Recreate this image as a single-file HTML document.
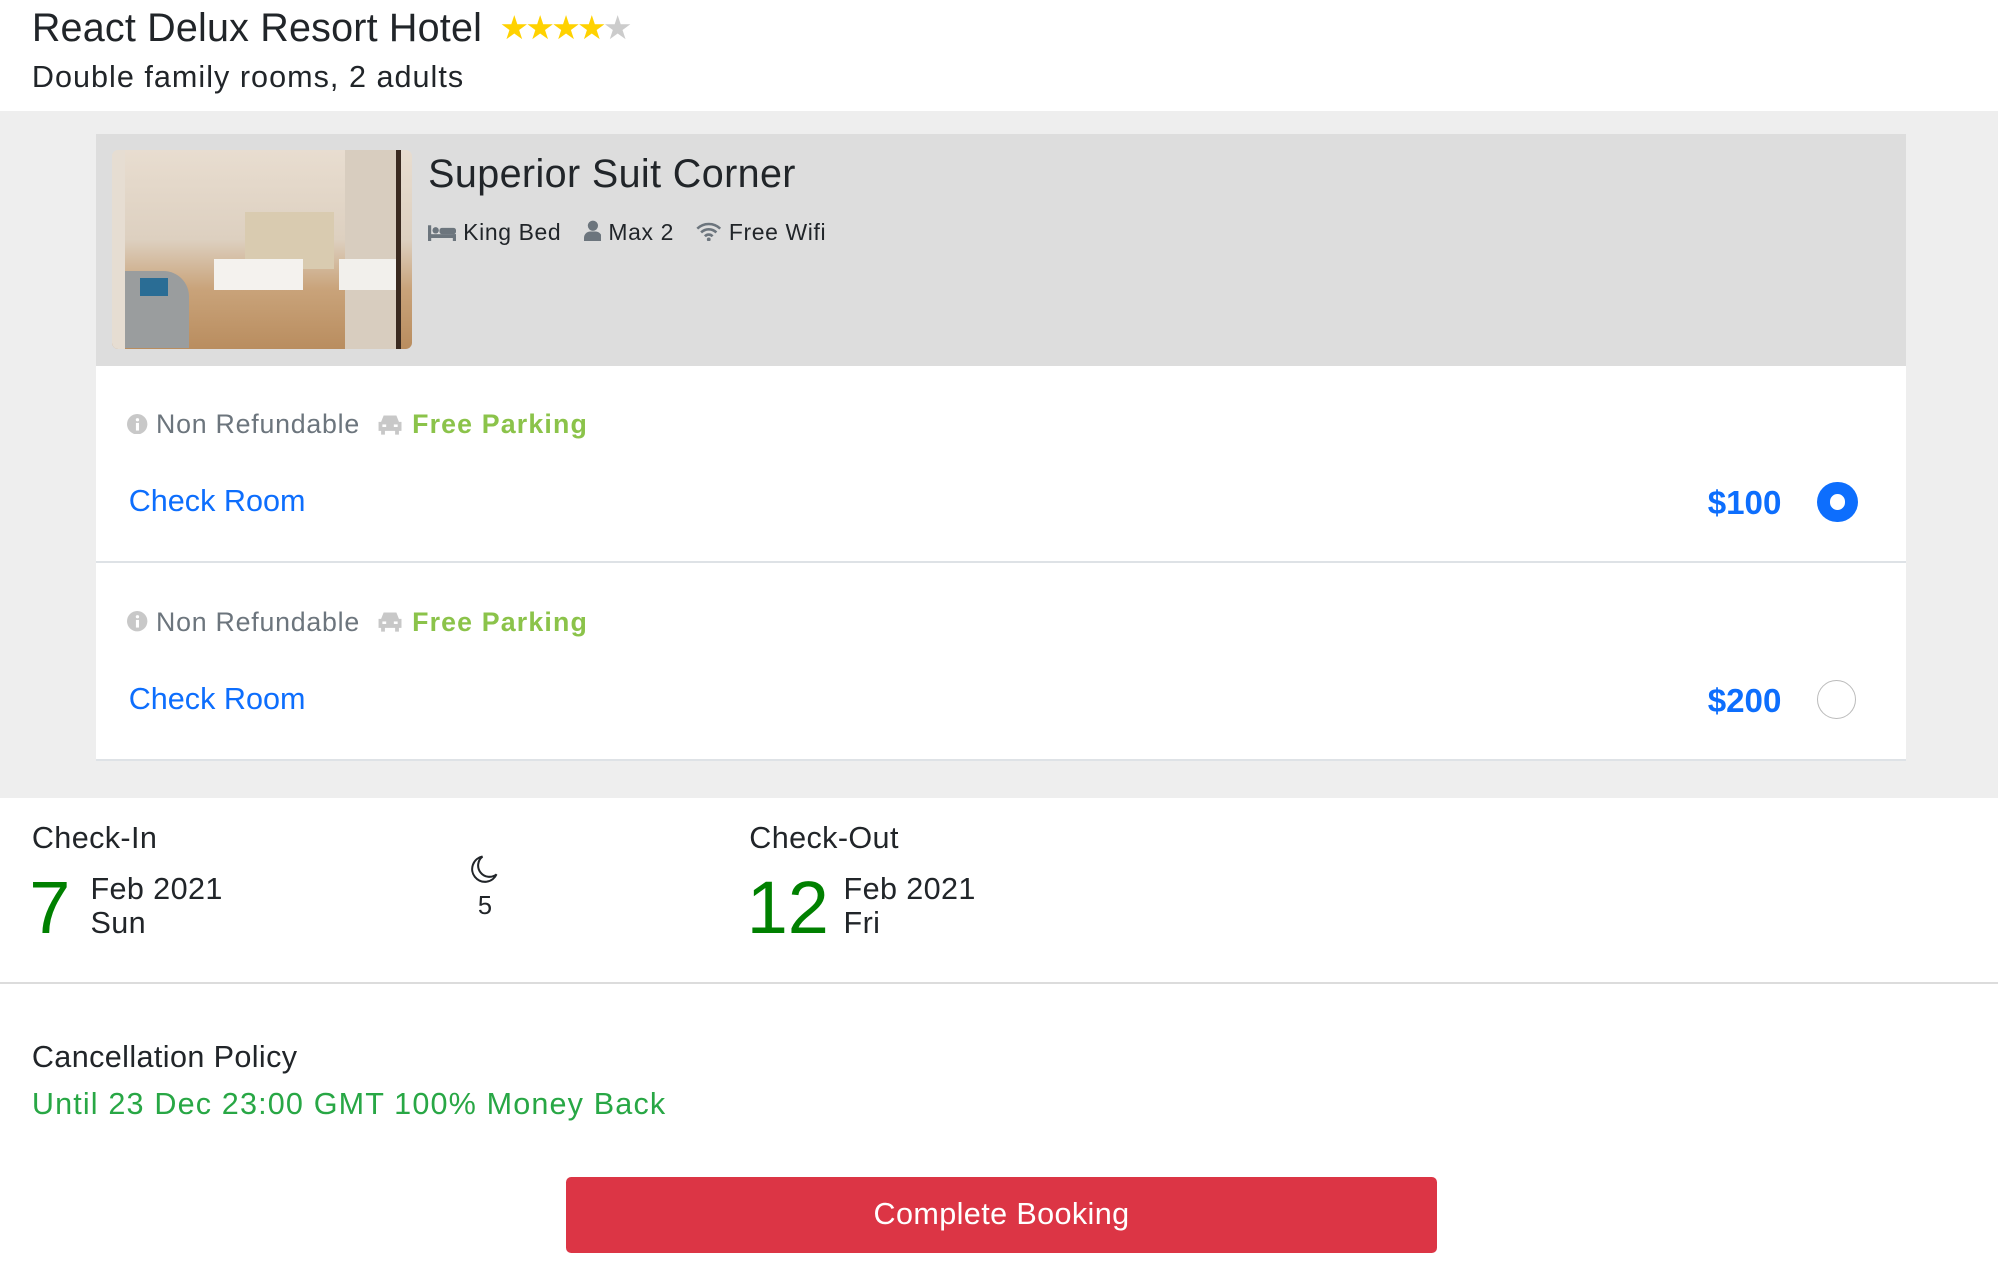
<!DOCTYPE html>
<html><head><meta charset="utf-8"><style>
html,body{margin:0;padding:0;background:#fff;overflow:hidden}
#w{position:relative;width:1568px;height:1011px;zoom:1.27423;font-family:"Liberation Sans",sans-serif;color:#212529}
.a{position:absolute;white-space:nowrap}
</style></head><body><div id="w">
<div class="a" style="left:25px;top:5px;font-size:31px;letter-spacing:0.15px">React Delux Resort Hotel</div>
<div class="a" style="left:392px;top:6px;font-size:26px;letter-spacing:-3px"><span style="color:#ffd200">★★★★</span><span style="color:#ccc">★</span></div>
<div class="a" style="left:25px;top:47px;font-size:24px;letter-spacing:0.8px">Double family rooms, 2 adults</div>

<div class="a" style="left:0;top:87px;width:1568px;height:539px;background:#eeeeee"></div>
<div class="a" style="left:75px;top:105px;width:1421px;height:182px;background:#dddddd"></div>
<div class="a" style="left:88px;top:118px;width:235px;height:156px;border-radius:5px;overflow:hidden;background:linear-gradient(180deg,#e8ddd0 0%,#ddd0c0 45%,#c9a37a 70%,#b98d5f 100%)">
  <div style="position:absolute;left:104px;top:48px;width:70px;height:45px;background:#d9cbb0"></div>
  <div style="position:absolute;left:80px;top:85px;width:70px;height:25px;background:#f4f2ee"></div>
  <div style="position:absolute;left:183px;top:0;width:40px;height:156px;background:#d8cdbf"></div>
  <div style="position:absolute;left:178px;top:85px;width:45px;height:25px;background:#f2f0ec"></div>
  <div style="position:absolute;left:223px;top:0;width:4px;height:156px;background:#3a2a20"></div>
  <div style="position:absolute;left:0;top:0;width:10px;height:156px;background:#e6ddd2"></div>
  <div style="position:absolute;left:10px;top:95px;width:50px;height:60px;background:#9a9d9e;border-radius:0 20px 0 0"></div>
  <div style="position:absolute;left:22px;top:100px;width:22px;height:14px;background:#2a6d95"></div>
</div>
<div class="a" style="left:336px;top:119px;font-size:31px;letter-spacing:0.3px">Superior Suit Corner</div>
<div class="a" style="left:336px;top:172px;font-size:18px;letter-spacing:0.5px">
<svg width="22" height="14" viewBox="0 0 22 14" style="vertical-align:-1px"><rect x="0" y="1" width="2.5" height="13" fill="#6c757d"/><rect x="0" y="8" width="22" height="3" fill="#6c757d"/><rect x="19.5" y="8" width="2.5" height="6" fill="#6c757d"/><circle cx="6" cy="5" r="2.5" fill="#6c757d"/><rect x="9" y="3" width="13" height="5" rx="2" fill="#6c757d"/></svg> King Bed
<svg width="14" height="17" viewBox="0 0 14 17" style="margin-left:12px;vertical-align:-1px"><circle cx="7" cy="4.5" r="4" fill="#6c757d"/><path d="M0 17v-3a5 5 0 0 1 5-5h4a5 5 0 0 1 5 5v3z" fill="#6c757d"/></svg> Max 2
<svg width="20" height="16" viewBox="0 0 20 16" style="margin-left:12px;vertical-align:-1px"><path d="M1 6a13 13 0 0 1 18 0M4 9a8.5 8.5 0 0 1 12 0M7 12a4 4 0 0 1 6 0" stroke="#6c757d" stroke-width="2" fill="none"/><circle cx="10" cy="14.5" r="1.5" fill="#6c757d"/></svg> Free Wifi
</div>

<div class="a" style="left:75px;top:287px;width:1421px;height:153px;background:#fff;border-bottom:2px solid #dee2e6"></div>
<div class="a" style="left:75px;top:442px;width:1421px;height:154px;background:#fff;border-bottom:2px solid #dee2e6"></div>

<div class="a" style="left:100px;top:321px;font-size:21px;color:#6c757d;letter-spacing:0.6px"><svg width="16" height="16" style="vertical-align:-1px"><circle cx="8" cy="8" r="8" fill="#c8c8c8"/><rect x="7" y="7" width="2.4" height="6" fill="#fff"/><circle cx="8.2" cy="4.5" r="1.3" fill="#fff"/></svg> Non Refundable <svg width="22" height="18" viewBox="0 0 22 18" style="margin-left:6px;vertical-align:-2px"><path d="M4 7l2-5h10l2 5h2v7h-2v3h-3v-3H7v3H4v-3H2V7z" fill="#c8c8c8"/><rect x="5" y="9" width="3" height="2" fill="#fff"/><rect x="14" y="9" width="3" height="2" fill="#fff"/></svg> <b style="color:#8bc34a;letter-spacing:0.9px">Free Parking</b></div>
<div class="a" style="left:101px;top:380px;font-size:24px;color:#0d6efd">Check Room</div>
<div class="a" style="right:170px;top:381px;font-size:26px;font-weight:bold;color:#0d6efd">$100</div>
<div class="a" style="left:1426px;top:378px;width:32px;height:32px;border-radius:50%;background:#0d6efd"><div style="position:absolute;left:10px;top:10px;width:12px;height:12px;border-radius:50%;background:#fff"></div></div>

<div class="a" style="left:100px;top:476px;font-size:21px;color:#6c757d;letter-spacing:0.6px"><svg width="16" height="16" style="vertical-align:-1px"><circle cx="8" cy="8" r="8" fill="#c8c8c8"/><rect x="7" y="7" width="2.4" height="6" fill="#fff"/><circle cx="8.2" cy="4.5" r="1.3" fill="#fff"/></svg> Non Refundable <svg width="22" height="18" viewBox="0 0 22 18" style="margin-left:6px;vertical-align:-2px"><path d="M4 7l2-5h10l2 5h2v7h-2v3h-3v-3H7v3H4v-3H2V7z" fill="#c8c8c8"/><rect x="5" y="9" width="3" height="2" fill="#fff"/><rect x="14" y="9" width="3" height="2" fill="#fff"/></svg> <b style="color:#8bc34a;letter-spacing:0.9px">Free Parking</b></div>
<div class="a" style="left:101px;top:535px;font-size:24px;color:#0d6efd">Check Room</div>
<div class="a" style="right:170px;top:536px;font-size:26px;font-weight:bold;color:#0d6efd">$200</div>
<div class="a" style="left:1426px;top:534px;width:29px;height:29px;border-radius:50%;border:1.5px solid #bbb;background:#fff"></div>

<div class="a" style="left:25px;top:644px;font-size:24px;letter-spacing:0.3px">Check-In</div>
<div class="a" style="left:23px;top:677px;font-size:58px;color:#008000;line-height:70px">7</div>
<div class="a" style="left:71px;top:684px;font-size:24px;line-height:27px;letter-spacing:0.3px">Feb 2021<br>Sun</div>
<svg class="a" style="left:370px;top:670px" width="22" height="24" viewBox="0 0 22 24"><path d="M9 2a10 10 0 1 0 11 14A8 8 0 0 1 9 2z" fill="none" stroke="#212529" stroke-width="1.6"/></svg>
<div class="a" style="left:375px;top:700px;font-size:20px">5</div>
<div class="a" style="left:588px;top:644px;font-size:24px;letter-spacing:0.3px">Check-Out</div>
<div class="a" style="left:586px;top:677px;font-size:58px;color:#008000;line-height:70px">12</div>
<div class="a" style="left:662px;top:684px;font-size:24px;line-height:27px;letter-spacing:0.3px">Feb 2021<br>Fri</div>
<div class="a" style="left:0;top:771px;width:1568px;height:1px;background:#dcdcdc"></div>

<div class="a" style="left:25px;top:816px;font-size:24px;letter-spacing:0.3px">Cancellation Policy</div>
<div class="a" style="left:25px;top:853px;font-size:24px;color:#28a745;letter-spacing:0.9px">Until 23 Dec 23:00 GMT 100% Money Back</div>
<div class="a" style="left:444px;top:924px;width:684px;height:59px;border-radius:4px;background:#dc3545;color:#fff;font-size:24px;text-align:center;line-height:59px;letter-spacing:0.3px">Complete Booking</div>
</div></body></html>
